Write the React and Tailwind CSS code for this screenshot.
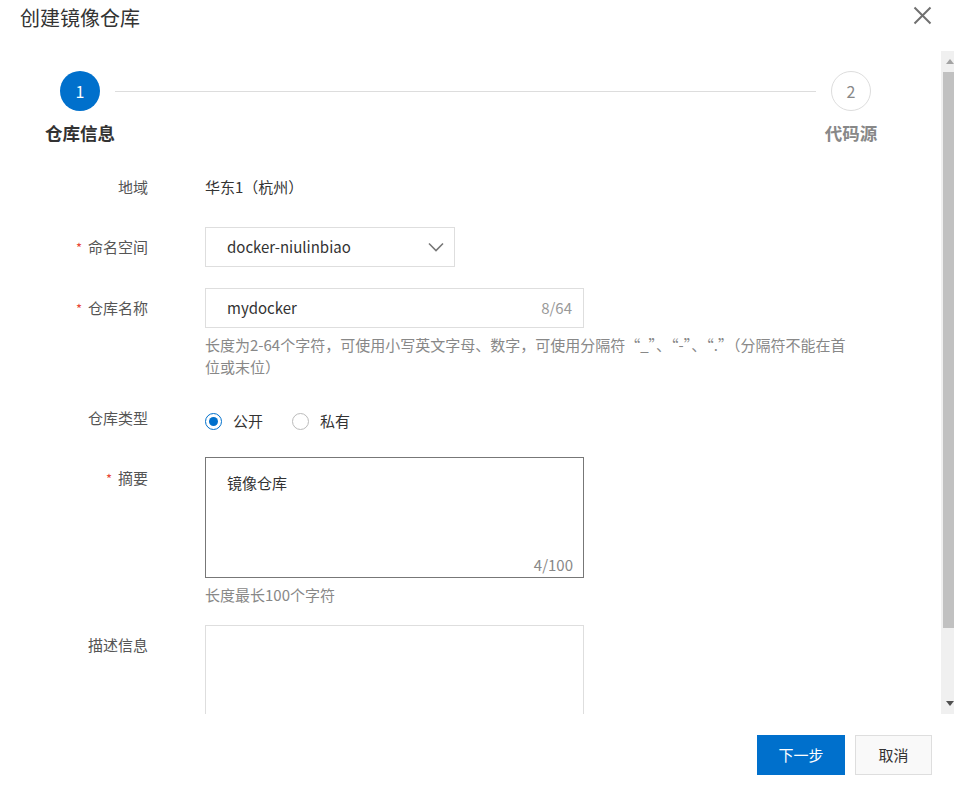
import { useState } from 'react'

const FONT = "font-['Noto_Sans_CJK_SC','Noto_Sans',sans-serif]"

const Label = ({ required, children, className = '' }) => (
    <div className={`w-[148px] shrink-0 text-right text-[15px] text-[#555] ${className}`}>
        {required && <span className="mr-[6px] text-[13px] text-[#e84738]">*</span>}
        {children}
    </div>
)

const Radio = ({ checked, label }) => (
    <div className="flex items-center gap-[11px]">
        {checked ? (
            <span className="flex h-[17px] w-[17px] items-center justify-center rounded-full border-[1.5px] border-[#0070cc]">
                <span className="h-[9px] w-[9px] rounded-full bg-[#0070cc]" />
            </span>
        ) : (
            <span className="h-[17px] w-[17px] rounded-full border border-[#bbbbbb]" />
        )}
        <span className="text-[15px] leading-[20px] text-[#333]">{label}</span>
    </div>
)

const Scrollbar = () => (
    <div className="flex w-[13px] shrink-0 flex-col bg-[#f0f0f0]">
        <div className="flex h-[21px] items-center pl-[5px]">
            <svg width="8" height="5" viewBox="0 0 8 5"><path d="M0 5 L4 0 L8 5 Z" fill="#a3a3a3" /></svg>
        </div>
        <div className="ml-[2px] h-[556px] bg-[#c1c1c1]" />
        <div className="flex-1" />
        <div className="flex h-[21px] items-center pl-[5px]">
            <svg width="8" height="5" viewBox="0 0 8 5"><path d="M0 0 L8 0 L4 5 Z" fill="#505050" /></svg>
        </div>
    </div>
)

export default function App() {
    const [type] = useState('public')

    return (
        <div className={`flex h-[796px] w-[954px] flex-col bg-white ${FONT}`}>
            {/* header */}
            <div className="flex h-[51px] shrink-0 items-start justify-between pl-5 pr-[22px]">
                <h1 className="pt-[5px] text-[20px] leading-[26px] text-[#333]">创建镜像仓库</h1>
                <svg className="mt-[6px]" width="19" height="19" viewBox="0 0 19 19">
                    <path d="M1.5 1.5 L17.5 17.5 M17.5 1.5 L1.5 17.5" stroke="#707070" strokeWidth="2" />
                </svg>
            </div>

            {/* body */}
            <div className="flex min-h-0 flex-1">
                <div className="min-w-0 flex-1 overflow-hidden">
                    {/* steps */}
                    <div className="grid grid-cols-[80px_1fr_80px] pl-10 pr-[50px] pt-5">
                        <div className="flex justify-center">
                            <div className="flex h-10 w-10 items-center justify-center rounded-full bg-[#0070cc] text-[16px] text-white">1</div>
                        </div>
                        <div className="mx-[-5px] flex items-center">
                            <div className="h-px w-full bg-[#dddddd]" />
                        </div>
                        <div className="flex justify-center">
                            <div className="flex h-10 w-10 items-center justify-center rounded-full border border-[#dddddd] text-[16px] text-[#888]">2</div>
                        </div>
                        <div className="mt-[10px] text-center text-[17.5px] font-bold leading-[24px] text-[#333]">仓库信息</div>
                        <div />
                        <div className="mt-[10px] text-center text-[17.5px] font-bold leading-[24px] text-[#888]">代码源</div>
                    </div>

                    {/* form */}
                    <div className="mt-[32px] flex flex-col">
                        <div className="flex leading-[20px]">
                            <Label>地域</Label>
                            <div className="ml-[57px] text-[15px] text-[#333]">华东1（杭州）</div>
                        </div>

                        <div className="mt-[30px] flex">
                            <Label required className="leading-[40px]">命名空间</Label>
                            <div className="ml-[57px] flex h-10 w-[250px] items-center justify-between border border-[#dedede] pl-[21px] pr-[10px] text-[15px] text-[#333]">
                                <span>docker-niulinbiao</span>
                                <svg width="16" height="10" viewBox="0 0 16 10">
                                    <path d="M1 1.5 L8 8.5 L15 1.5" fill="none" stroke="#777" strokeWidth="1.6" />
                                </svg>
                            </div>
                        </div>

                        <div className="mt-5 flex">
                            <Label required className="leading-[40px]">仓库名称</Label>
                            <div className="ml-[57px] flex flex-col">
                                <div className="flex h-10 w-[379px] items-center justify-between border border-[#dedede] pl-[21px] pr-[11px] text-[15px]">
                                    <span className="text-[#333]">mydocker</span>
                                    <span className="text-[#999]">8/64</span>
                                </div>
                                <p className="mt-[6px] w-[645px] text-[15px] leading-[22px] text-[#888]">
                                    长度为2-64个字符，可使用小写英文字母、数字，可使用分隔符“_”、“-”、“.”（分隔符不能在首位或末位）
                                </p>
                            </div>
                        </div>

                        <div className="mt-[30px] flex leading-[20px]">
                            <Label>仓库类型</Label>
                            <div className="ml-[57px] flex gap-[29px] pt-[3px]">
                                <Radio checked={type === 'public'} label="公开" />
                                <Radio checked={type === 'private'} label="私有" />
                            </div>
                        </div>

                        <div className="mt-[26px] flex">
                            <Label required className="pt-[11px] leading-[20px]">摘要</Label>
                            <div className="ml-[57px] flex flex-col">
                                <div className="flex h-[121px] w-[379px] flex-col justify-between border border-[#777] pb-[2px] pl-[21px] pr-[10px] pt-[15px] text-[15px] leading-[20px]">
                                    <span className="text-[#333]">镜像仓库</span>
                                    <span className="self-end text-[#888]">4/100</span>
                                </div>
                                <p className="mt-[6px] text-[15px] leading-[22px] text-[#888]">长度最长100个字符</p>
                            </div>
                        </div>

                        <div className="mt-[19px] flex">
                            <Label className="pt-[10px] leading-[20px]">描述信息</Label>
                            <div className="ml-[57px] h-[121px] w-[379px] shrink-0 border border-[#dedede]" />
                        </div>
                    </div>
                </div>
                <Scrollbar />
            </div>

            {/* footer */}
            <div className="flex h-[82px] shrink-0 items-start justify-end gap-[10px] pr-[22px] pt-[21px]">
                <button className="h-10 w-[88px] bg-[#0070cc] text-[15px] text-white">下一步</button>
                <button className="h-10 w-[77px] border border-[#dedede] bg-[#f9f9f9] text-[15px] text-[#333]">取消</button>
            </div>
        </div>
    )
}
